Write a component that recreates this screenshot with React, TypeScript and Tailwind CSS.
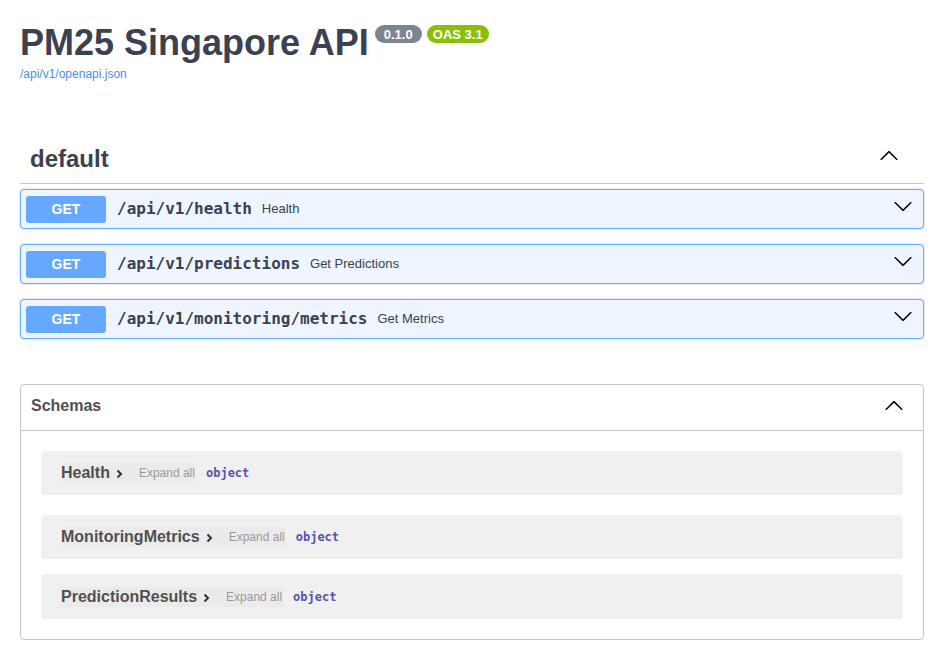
import React from "react";

const ChevronDown = ({ className = "" }: { className?: string }) => (
  <svg width="20" height="20" viewBox="0 0 20 20" className={className} aria-hidden="true">
    <path
      fill="#000"
      d="M17.418 6.109c.272-.268.709-.268.979 0s.271.701 0 .969l-7.908 7.83c-.27.268-.707.268-.979 0l-7.908-7.83c-.27-.268-.27-.701 0-.969.271-.268.709-.268.979 0L10 13.25l7.418-7.141z"
    />
  </svg>
);

const ChevronUp = ({ className = "" }: { className?: string }) => (
  <svg width="20" height="20" viewBox="0 0 20 20" className={className} aria-hidden="true">
    <g transform="rotate(180 10 10)">
      <path
        fill="#000"
        d="M17.418 6.109c.272-.268.709-.268.979 0s.271.701 0 .969l-7.908 7.83c-.27.268-.707.268-.979 0l-7.908-7.83c-.27-.268-.27-.701 0-.969.271-.268.709-.268.979 0L10 13.25l7.418-7.141z"
      />
    </g>
  </svg>
);

const SmallRight = () => (
  <svg width="7" height="10" viewBox="0 0 7 10" className="ml-[6px] mt-[2px]" aria-hidden="true">
    <polyline points="1.5,1.5 5,5 1.5,8.5" fill="none" stroke="#333" strokeWidth="2" />
  </svg>
);

const ops = [
  { path: "/api/v1/health", summary: "Health" },
  { path: "/api/v1/predictions", summary: "Get Predictions" },
  { path: "/api/v1/monitoring/metrics", summary: "Get Metrics" },
];

const models = [
  { name: "Health", h: "h-[44px] mb-[20px]" },
  { name: "MonitoringMetrics", h: "h-[44px] mb-[15px]" },
  { name: "PredictionResults", h: "h-[45px]" },
];

export default function App() {
  return (
    <div className="w-[938px] h-[665px] overflow-hidden bg-white text-[#3b4151] font-['Liberation_Sans',Arial,sans-serif]">
      <div className="pl-[20px] pr-[14px] pt-[21px]">
        {/* Info */}
        <div className="flex items-start">
          <h2 className="text-[36px] font-bold leading-[43px] m-0">PM25 Singapore API</h2>
          <span className="ml-[6px] mt-[4px] w-[47px] h-[18px] rounded-full bg-[#7d8492] text-white text-[13px] font-bold flex items-center justify-center leading-none">
            0.1.0
          </span>
          <span className="ml-[5px] mt-[4px] w-[62px] h-[18px] rounded-full bg-[#89bf04] text-white text-[13px] font-bold flex items-center justify-center leading-none">
            OAS 3.1
          </span>
        </div>
        <div className="mt-[2px] text-[12px] leading-[16px] text-[#4990e2]">/api/v1/openapi.json</div>

        {/* default tag */}
        <div className="mt-[52px] h-[50px] border-b border-[#c4c6cb] flex items-center justify-between pl-[10px] pr-[25px]">
          <h3 className="text-[24px] font-bold leading-[29px]">default</h3>
          <ChevronUp className="-mt-[5px]" />
        </div>

        <div className="mt-[5px] flex flex-col gap-[15px]">
          {ops.map((op) => (
            <div
              key={op.path}
              className="h-[40px] border border-[#61affe] rounded-[4px] bg-[#eef5ff] shadow-[0_0_3px_rgba(0,0,0,0.19)] flex items-center pl-[5px] pr-[10px]"
            >
              <span className="w-[80px] h-[27px] rounded-[3px] bg-[#66a8fd] text-white text-[14px] font-bold flex items-center justify-center">
                GET
              </span>
              <span className="ml-[11px] text-[16px] font-bold font-['DejaVu_Sans_Mono',monospace] text-[#3b4151]">
                {op.path}
              </span>
              <span className="ml-[10px] text-[13px] text-[#3b4151]">{op.summary}</span>
              <ChevronDown className="ml-auto -mt-[7px]" />
            </div>
          ))}
        </div>

        {/* Schemas */}
        <div className="mt-[45px] border border-[#c4c6cb] rounded-[4px]">
          <div className="h-[46px] border-b border-[#c4c6cb] flex items-center justify-between pl-[10px] pr-[19px]">
            <h4 className="text-[16px] font-bold text-[#505050] -mt-[4px]">Schemas</h4>
            <ChevronUp className="-mt-[4px]" />
          </div>
          <div className="p-[20px]">
            {models.map((m) => (
              <div key={m.name} className={`${m.h} bg-[#f0f0f0] rounded-[4px] flex items-center pl-[20px]`}>
                <span className="h-[20px] bg-[#ebebeb] inline-flex items-center pr-[10px] text-[16px] font-bold text-[#505050]">
                  {m.name}
                  <SmallRight />
                </span>
                <span className="h-[20px] bg-[#ebebeb] inline-flex items-center pl-[6px] pr-[1px] text-[12px] text-[#999]">
                  Expand all
                </span>
                <span className="ml-[10px] text-[12px] font-bold font-['DejaVu_Sans_Mono',monospace] text-[#55a]">
                  object
                </span>
              </div>
            ))}
          </div>
        </div>
      </div>
    </div>
  );
}
